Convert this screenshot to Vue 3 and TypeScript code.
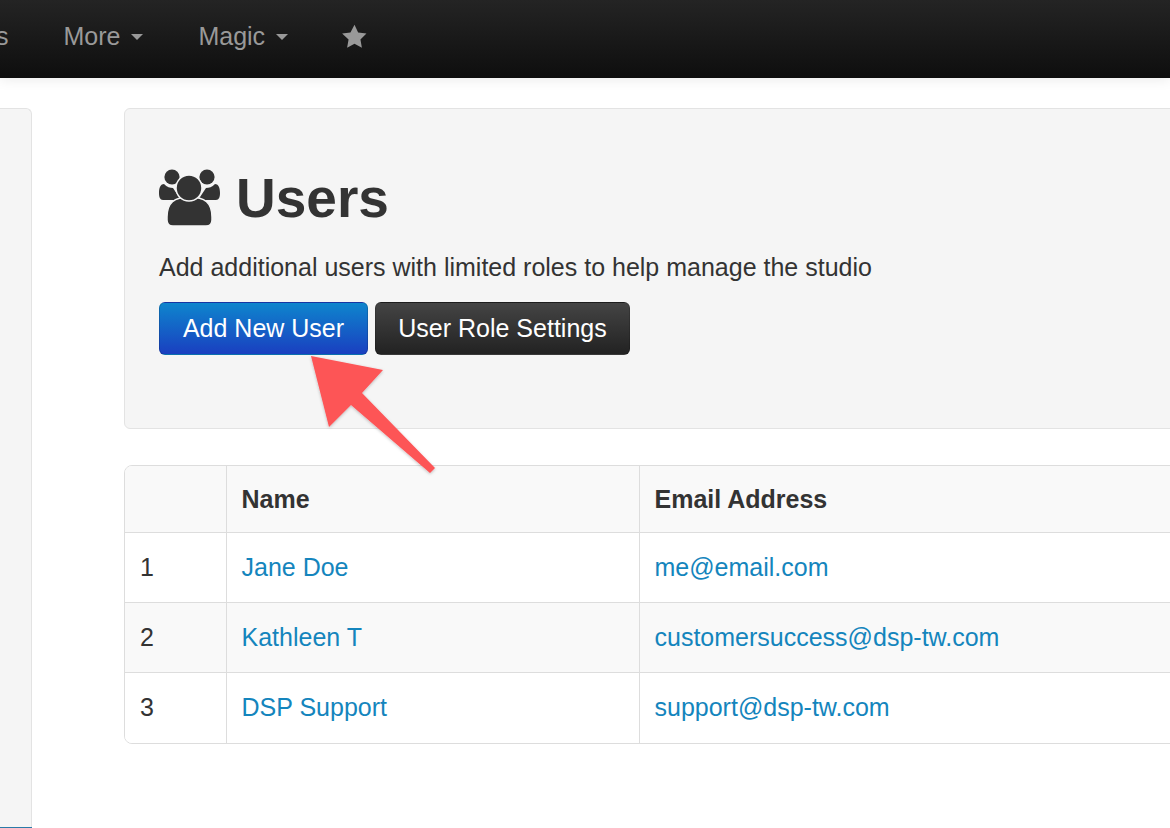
<script setup lang="ts">
interface UserRow { id: number; name: string; email: string }
const users: UserRow[] = [
  { id: 1, name: 'Jane Doe', email: 'me@email.com' },
  { id: 2, name: 'Kathleen T', email: 'customersuccess@dsp-tw.com' },
  { id: 3, name: 'DSP Support', email: 'support@dsp-tw.com' },
]
</script>

<template>
  <div class="page">
    <nav class="navbar">
      <a class="nav-item clipped">ts</a>
      <a class="nav-item more">More <span class="caret"></span></a>
      <a class="nav-item magic">Magic <span class="caret"></span></a>
      <svg class="star" viewBox="0 0 24 24" width="25" height="25" aria-hidden="true">
        <path d="M12 .8l3.5 7.3 8 1.1-5.8 5.6 1.4 8-7.1-3.8-7.1 3.8 1.4-8L.1 9.2l8-1.1z" fill="#999" />
      </svg>
    </nav>

    <div class="body">
      <aside class="sidebar"><div class="side-accent"></div></aside>
      <main class="main">
        <section class="hero">
          <h1 class="title">
            <svg class="users-icon" viewBox="0 0 62 60" width="62" height="60" aria-hidden="true">
              <circle cx="13" cy="10" r="7.6" fill="#333" />
              <circle cx="48" cy="10" r="7.6" fill="#333" />
              <path d="M0 26c0-6 2-9 5-9 3 3 6 4 9 4l8 12H4c-3 0-4-3-4-7z" fill="#333" />
              <path d="M61 26c0-6-2-9-5-9-3 3-6 4-9 4l-8 12h18c3 0 4-3 4-7z" fill="#333" />
              <path d="M8 50c0-14 7-20 22.500-20S53 36 53 50v3c0 4-2 6-6 6H14c-4 0-6-2-6-6z" fill="#333" stroke="#f5f5f5" stroke-width="1.500" />
              <circle cx="30" cy="21" r="13" fill="#333" stroke="#f5f5f5" stroke-width="1.500" />
            </svg>
            <span>Users</span>
          </h1>
          <p class="lead">Add additional users with limited roles to help manage the studio</p>
          <div class="actions">
            <button class="btn btn-blue" type="button">Add New User</button>
            <button class="btn btn-dark" type="button">User Role Settings</button>
          </div>
        </section>

        <div class="table-wrap">
          <table class="table">
            <colgroup>
              <col class="col-num" />
              <col class="col-name" />
              <col class="col-email" />
            </colgroup>
            <thead>
              <tr><th></th><th>Name</th><th>Email Address</th></tr>
            </thead>
            <tbody>
              <tr v-for="u in users" :key="u.id">
                <td class="num">{{ u.id }}</td>
                <td><a class="link">{{ u.name }}</a></td>
                <td><a class="link">{{ u.email }}</a></td>
              </tr>
            </tbody>
          </table>
        </div>
      </main>
    </div>

    <svg class="arrow" viewBox="0 0 1170 828" width="1170" height="828" aria-hidden="true">
      <defs>
        <filter id="arrow-shadow" x="-20%" y="-20%" width="140%" height="140%">
          <feDropShadow dx="0" dy="1" stdDeviation="1.500" flood-color="#000" flood-opacity="0.25" />
        </filter>
      </defs>
      <path d="M311 356L383 370L362 393L435 468L430 473L351 405L329 427Z" fill="#fd5457" filter="url(#arrow-shadow)" />
    </svg>
  </div>
</template>

<style>
html, body { margin: 0; background: #fff; overflow: hidden; }
</style>

<style scoped>
.page {
  position: relative;
  width: 1170px;
  height: 828px;
  overflow: hidden;
  font-family: "Liberation Sans", Arial, sans-serif;
  font-size: 25px;
  color: #333;
  background: #fff;
}
.navbar {
  display: flex;
  align-items: center;
  height: 78px;
  padding-bottom: 6px;
  box-sizing: border-box;
  background: linear-gradient(#242424, #0e0e0e);
  box-shadow: 0 2px 12px rgba(0, 0, 0, 0.08);
  color: #999;
}
.nav-item { display: flex; align-items: center; white-space: nowrap; }
.clipped { margin-left: -11px; }
.more { margin-left: 55px; }
.magic { margin-left: 55px; }
.caret {
  width: 0;
  height: 0;
  margin-left: 11px;
  margin-top: 1px;
  border-left: 6.5px solid transparent;
  border-right: 6.5px solid transparent;
  border-top: 6.5px solid #999;
}
.star { margin-left: 54px; }
.body {
  display: flex;
  align-items: stretch;
  height: 750px;
}
.sidebar {
  position: relative;
  flex: none;
  width: 32px;
  margin-top: 30px;
  height: 720px;
  box-sizing: border-box;
  background: #f5f5f5;
  border: 1px solid #e3e3e3;
  border-left: 0;
  border-bottom: 0;
  border-radius: 0 6px 0 0;
}
.side-accent {
  position: absolute;
  left: 0;
  right: -1px;
  bottom: 0;
  height: 1px;
  background: #2a7ba8;
}
.main { flex: none; width: 1100px; margin-left: 92px; padding-top: 30px; }
.hero {
  box-sizing: border-box;
  height: 321px;
  padding: 49px 34px 0;
  background: #f5f5f5;
  border: 1px solid #e3e3e3;
  border-radius: 6px;
}
.title {
  display: flex;
  align-items: center;
  gap: 15px;
  margin: 0;
  height: 80px;
  font-size: 55px;
  font-weight: 700;
  line-height: 80px;
  color: #333;
}
.users-icon { flex: none; margin-top: -2px; }
.lead { margin: 11px 0 0; font-size: 25px; line-height: 36px; }
.actions { display: flex; gap: 7px; margin-top: 17px; }
.btn {
  height: 53px;
  padding: 0 22px;
  border: 1px solid rgba(0, 0, 0, 0.15);
  border-radius: 6px;
  color: #fff;
  font: inherit;
  font-size: 25px;
}
.btn-blue { width: 209px; padding: 0; background: linear-gradient(#0e85cd, #1a3fc0); }
.btn-dark { width: 255px; padding: 0; background: linear-gradient(#444, #222); }
.table-wrap {
  margin-top: 36px;
  border: 1px solid #ddd;
  border-radius: 8px;
  overflow: hidden;
  width: 1100px;
  box-sizing: border-box;
}
.table { width: 100%; border-collapse: collapse; table-layout: fixed; }
.col-num { width: 101px; }
.col-name { width: 413px; }
th, td {
  padding: 0 15px;
  text-align: left;
  border-left: 1px solid #ddd;
}
th:first-child, td:first-child { border-left: 0; }
th {
  height: 66px;
  font-weight: 700;
  background: #f9f9f9;
}
td { height: 70px; border-top: 1px solid #ddd; box-sizing: border-box; }
.num { background: #fff; }
tbody tr:nth-child(even) td { background: #f9f9f9; }
.link { color: #1485bd; }
.arrow { position: absolute; left: 0; top: 0; pointer-events: none; }
</style>
